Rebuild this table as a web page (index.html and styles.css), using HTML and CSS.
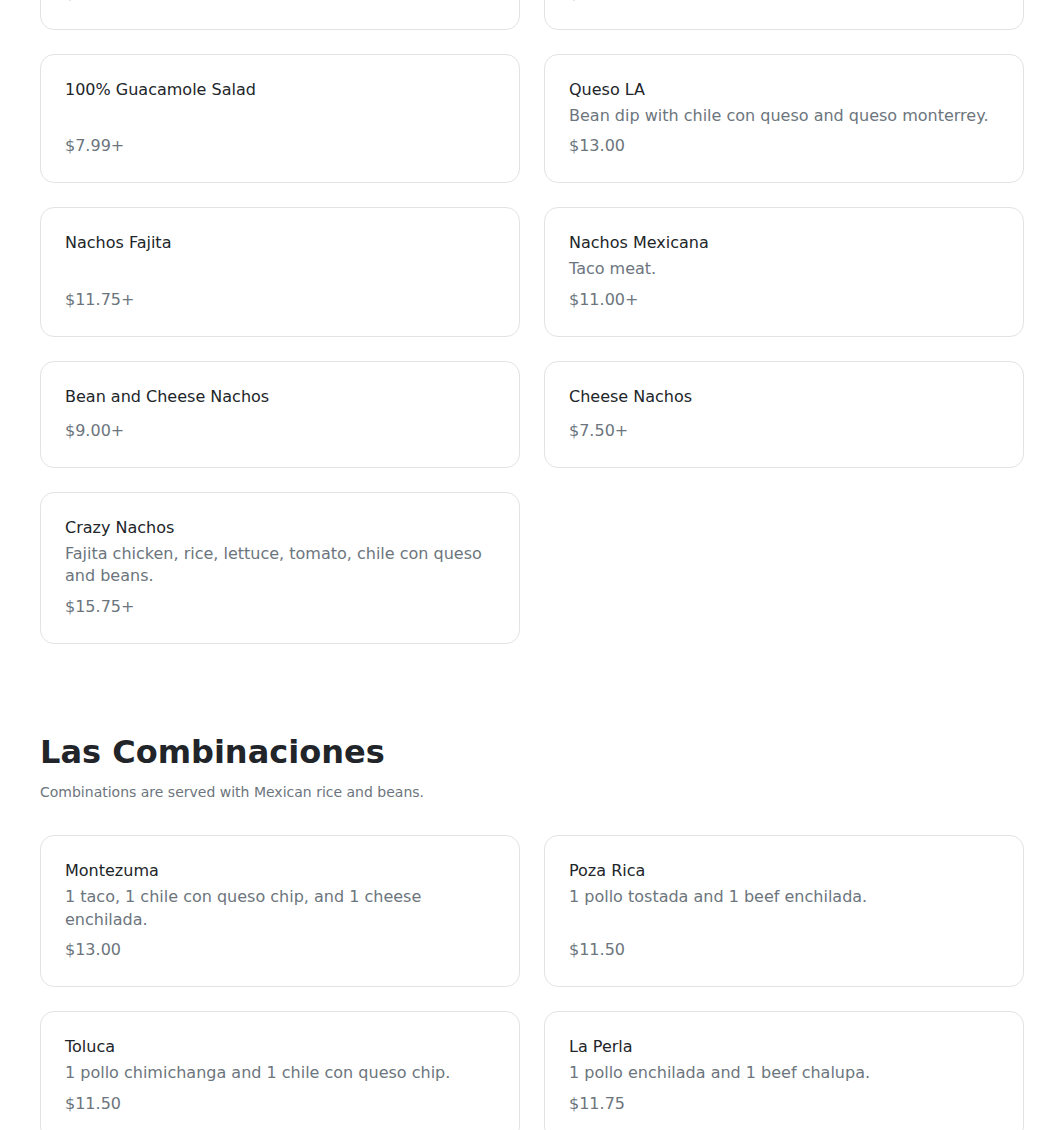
FILE: index.html
```html
<!DOCTYPE html>
<html lang="en">
<head>
<meta charset="utf-8">
<title>Menu</title>
<link rel="stylesheet" href="styles.css">
</head>
<body>
<main class="menu">
  <section class="section section-cont">
    <div class="grid">
      <div class="card">
        <div class="item-name">Guacamole Dip</div>
        <div class="item-desc">Fresh guacamole.</div>
        <div class="item-price">$9.50</div>
      </div>
      <div class="card">
        <div class="item-name">Chile con Queso</div>
        <div class="item-desc">Melted cheese dip.</div>
        <div class="item-price">$9.00</div>
      </div>
      <div class="card">
        <div class="item-name">100% Guacamole Salad</div>
        <div class="item-price">$7.99+</div>
      </div>
      <div class="card">
        <div class="item-name">Queso LA</div>
        <div class="item-desc">Bean dip with chile con queso and queso monterrey.</div>
        <div class="item-price">$13.00</div>
      </div>
      <div class="card">
        <div class="item-name">Nachos Fajita</div>
        <div class="item-price">$11.75+</div>
      </div>
      <div class="card">
        <div class="item-name">Nachos Mexicana</div>
        <div class="item-desc">Taco meat.</div>
        <div class="item-price">$11.00+</div>
      </div>
      <div class="card">
        <div class="item-name">Bean and Cheese Nachos</div>
        <div class="item-price">$9.00+</div>
      </div>
      <div class="card">
        <div class="item-name">Cheese Nachos</div>
        <div class="item-price">$7.50+</div>
      </div>
      <div class="card">
        <div class="item-name">Crazy Nachos</div>
        <div class="item-desc">Fajita chicken, rice, lettuce, tomato, chile con queso and beans.</div>
        <div class="item-price">$15.75+</div>
      </div>
    </div>
  </section>

  <section class="section">
    <h2 class="section-title">Las Combinaciones</h2>
    <p class="section-sub">Combinations are served with Mexican rice and beans.</p>
    <div class="grid">
      <div class="card">
        <div class="item-name">Montezuma</div>
        <div class="item-desc">1 taco, 1 chile con queso chip, and 1 cheese enchilada.</div>
        <div class="item-price">$13.00</div>
      </div>
      <div class="card">
        <div class="item-name">Poza Rica</div>
        <div class="item-desc">1 pollo tostada and 1 beef enchilada.</div>
        <div class="item-price">$11.50</div>
      </div>
      <div class="card">
        <div class="item-name">Toluca</div>
        <div class="item-desc">1 pollo chimichanga and 1 chile con queso chip.</div>
        <div class="item-price">$11.50</div>
      </div>
      <div class="card">
        <div class="item-name">La Perla</div>
        <div class="item-desc">1 pollo enchilada and 1 beef chalupa.</div>
        <div class="item-price">$11.75</div>
      </div>
    </div>
  </section>
</main>
</body>
</html>
```

FILE: styles.css
```css
html, body {
  margin: 0;
  padding: 0;
  background: #ffffff;
}

body {
  font-family: "DejaVu Sans", sans-serif;
  color: #212529;
}

.menu {
  padding: 0 20px 0 40px;
  margin-top: -99.4px;
}

.section + .section {
  margin-top: 89.4px;
}

.section-title {
  margin: 0 0 11px;
  font-size: 32px;
  line-height: 1.2;
  font-weight: 700;
  color: #212529;
}

.section-sub {
  margin: 0 0 32px;
  font-size: 14px;
  line-height: 21px;
  color: #6c757d;
}

.grid {
  display: grid;
  grid-template-columns: 1fr 1fr;
  gap: 24px;
}

.card {
  display: flex;
  flex-direction: column;
  border: 1px solid #e2e3e5;
  border-radius: 14px;
  padding: 24px;
  background: #fff;
}

.item-name {
  margin-bottom: 5px;
  font-size: 16px;
  line-height: 21px;
  color: #212529;
}

.item-desc {
  font-size: 16px;
  line-height: 1.4;
  color: #6c757d;
}

.item-price {
  margin-top: auto;
  padding-top: 7px;
  font-size: 16px;
  line-height: 24px;
  color: #6c757d;
}
```
